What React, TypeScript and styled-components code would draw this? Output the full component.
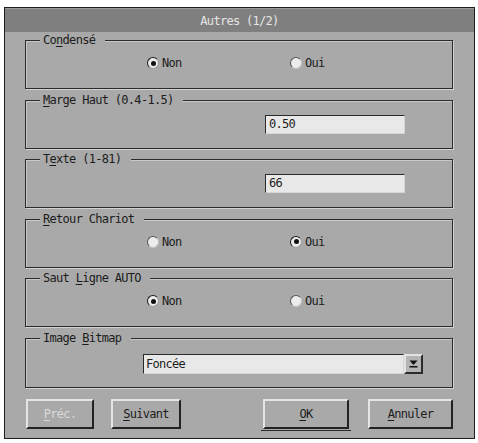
import React from 'react';
import styled, { createGlobalStyle } from 'styled-components';

const GRAY = '#a9a9a9';

const GlobalStyle = createGlobalStyle`
  html, body {
    margin: 0;
    padding: 0;
    background: #ffffff;
  }
  body {
    font-family: "DejaVu Sans Mono", "Liberation Mono", monospace;
    font-size: 12px;
    letter-spacing: -0.7px;
    color: #1c1c1c;
  }
`;

const Dialog = styled.div`
  box-sizing: border-box;
  width: 471px;
  height: 432px;
  margin: 7px 0 0 4px;
  border: 1px solid #1e1e1e;
  background: ${GRAY};
  display: flex;
  flex-direction: column;
`;

const TitleBar = styled.div`
  height: 24px;
  background: #7f7f7f;
  color: #e6e6e6;
  display: flex;
  align-items: center;
  justify-content: center;
  border-top: 1px solid #9a9a9a;
  box-sizing: border-box;
`;

const Body = styled.div`
  flex: 1;
  display: flex;
  flex-direction: column;
  padding: 8px 21px 0 20px;
`;

const Groups = styled.div`
  display: flex;
  flex-direction: column;
  gap: 10.5px;
`;

const GroupBox = styled.div<{ $h: number }>`
  position: relative;
  box-sizing: border-box;
  height: ${p => p.$h}px;
  border: 1px solid #2b2b2b;
  box-shadow: 1px 1px 0 #d2d2d2, inset 1px 1px 0 #c8c8c8;
`;

const Legend = styled.span`
  position: absolute;
  top: -8px;
  left: 14px;
  padding: 0 3px;
  line-height: 14px;
  background: ${GRAY};
  white-space: pre;
`;

const Key = styled.span`
  text-decoration: underline;
  text-underline-offset: 2px;
`;

const RadioRow = styled.div`
  display: flex;
  align-items: center;
  padding: 15px 0 0 121px;
  height: 14px;
`;

const Radio = styled.label`
  display: flex;
  align-items: center;
  gap: 3px;
  width: 143px;
  line-height: 14px;
`;

const Dot = styled.span<{ $on?: boolean }>`
  box-sizing: border-box;
  width: 12px;
  height: 12px;
  border-radius: 50%;
  background: #ececec;
  border: 1.5px solid;
  border-color: ${p => (p.$on ? '#1a1a1a #9a9a9a #9a9a9a #1a1a1a' : '#555 #c4c4c4 #c4c4c4 #555')};
  display: flex;
  align-items: center;
  justify-content: center;
  &::after {
    content: '';
    width: 5px;
    height: 5px;
    border-radius: 50%;
    background: ${p => (p.$on ? '#111' : 'transparent')};
  }
`;

const TextInput = styled.div`
  box-sizing: border-box;
  width: 140px;
  height: 19px;
  margin: 14px 0 0 239px;
  background: #e8e8e8;
  border: 1px solid;
  border-color: #2a2a2a #d6d6d6 #d6d6d6 #2a2a2a;
  padding: 0 3px;
  line-height: 17px;
`;

const Select = styled.div`
  display: flex;
  width: 280px;
  height: 20px;
  margin: 15px 0 0 117px;
`;

const SelectField = styled.div`
  flex: 1;
  box-sizing: border-box;
  background: #e8e8e8;
  border: 1px solid;
  border-color: #2a2a2a #d6d6d6 #d6d6d6 #2a2a2a;
  padding: 0 2px;
  line-height: 18px;
`;

const ArrowButton = styled.div`
  box-sizing: border-box;
  width: 19px;
  height: 20px;
  background: #b4b4b4;
  border: 2px solid;
  border-color: #e2e2e2 #2a2a2a #2a2a2a #e2e2e2;
  display: flex;
  align-items: center;
  justify-content: center;
`;

const ButtonRow = styled.div`
  display: flex;
  justify-content: space-between;
  margin-top: 11.5px;
  padding-left: 1px;
`;

const ButtonGroup = styled.div<{ $gap: number }>`
  display: flex;
  align-items: flex-start;
  gap: ${p => p.$gap}px;
`;

const Button = styled.button<{ $w: number; $disabled?: boolean }>`
  box-sizing: border-box;
  width: ${p => p.$w}px;
  height: 30px;
  background: ${GRAY};
  border: 2px solid;
  border-color: #e4e4e4 #222 #222 #e4e4e4;
  font: inherit;
  letter-spacing: inherit;
  color: ${p => (p.$disabled ? '#dadada' : '#1c1c1c')};
  padding: 0;
`;

const DefaultFrame = styled.div`
  padding: 0 2px 1px;
  margin: 0 -2px;
  border-bottom: 1px solid #2a2a2a;
`;

const RadioGroup = ({ label, on }: { label: React.ReactNode; on: 'Non' | 'Oui' }) => (
  <GroupBox $h={49}>
    <Legend>{label}</Legend>
    <RadioRow>
      <Radio>
        <Dot $on={on === 'Non'} />
        Non
      </Radio>
      <Radio>
        <Dot $on={on === 'Oui'} />
        Oui
      </Radio>
    </RadioRow>
  </GroupBox>
);

const SelectArrow = () => (
  <svg width="9" height="9" viewBox="0 0 9 9">
    <path d="M0.5 1.5 H8.5 L4.5 6 Z" fill="#111" />
    <rect x="0.5" y="7" width="8" height="1.5" fill="#111" />
  </svg>
);

export default function App() {
  return (
    <>
      <GlobalStyle />
      <Dialog>
        <TitleBar>Autres (1/2)</TitleBar>
        <Body>
          <Groups>
            <RadioGroup label={<>Co<Key>n</Key>densé </>} on="Non" />
            <GroupBox $h={49}>
              <Legend>
                <Key>M</Key>arge Haut (0.4-1.5){' '}
              </Legend>
              <TextInput>0.50</TextInput>
            </GroupBox>
            <GroupBox $h={49}>
              <Legend>
                T<Key>e</Key>xte (1-81){' '}
              </Legend>
              <TextInput>66</TextInput>
            </GroupBox>
            <RadioGroup label={<><Key>R</Key>etour Chariot </>} on="Oui" />
            <RadioGroup label={<>Saut <Key>L</Key>igne AUTO </>} on="Non" />
            <GroupBox $h={50}>
              <Legend>
                Image <Key>B</Key>itmap{' '}
              </Legend>
              <Select>
                <SelectField>Foncée</SelectField>
                <ArrowButton>
                  <SelectArrow />
                </ArrowButton>
              </Select>
            </GroupBox>
          </Groups>
          <ButtonRow>
            <ButtonGroup $gap={17}>
              <Button $w={68} $disabled>
                <Key>P</Key>réc.
              </Button>
              <Button $w={70}>
                <Key>S</Key>uivant
              </Button>
            </ButtonGroup>
            <ButtonGroup $gap={19}>
              <DefaultFrame>
                <Button $w={86}>
                  <Key>O</Key>K
                </Button>
              </DefaultFrame>
              <Button $w={85}>
                <Key>A</Key>nnuler
              </Button>
            </ButtonGroup>
          </ButtonRow>
        </Body>
      </Dialog>
    </>
  );
}
